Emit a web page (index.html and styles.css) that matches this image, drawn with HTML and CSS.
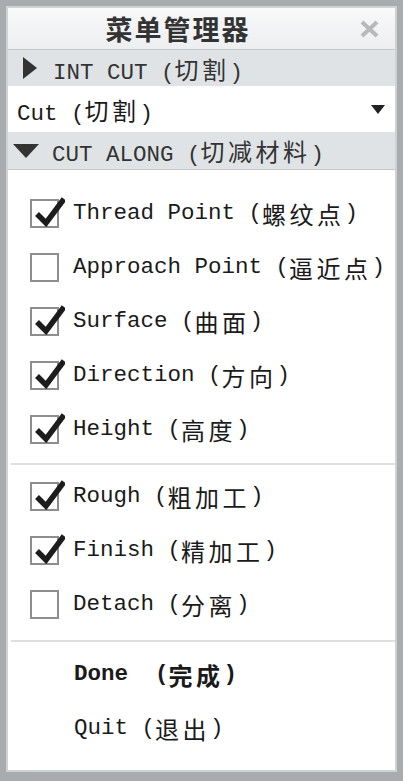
FILE: index.html
```html
<!DOCTYPE html>
<html lang="zh">
<head>
  <meta charset="UTF-8" />
  <title>菜单管理器</title>
  <link rel="stylesheet" href="styles.css">
</head>
<body>

  <div class="window">
    <div class="titlebar">
      <div class="title">菜单管理器</div>
      <svg class="close" width="19" height="18" viewBox="0 0 19 18">
        <path d="M2 2 L17 16 M17 2 L2 16" stroke="#b7b9ba" stroke-width="4" />
      </svg>
    </div>

    <div class="section">
      <span class="tri-right"></span>
      <span class="section-label">INT CUT (<span class="zh">切割</span>)</span>
    </div>

    <div class="select-row">
      <span>Cut (<span class="zh">切割</span>)</span>
      <span class="tri-small"></span>
    </div>

    <div class="section open">
      <span class="tri-down"></span>
      <span class="section-label">CUT ALONG (<span class="zh">切减材料</span>)</span>
    </div>

    <div class="menu">
      <div class="group first">
        <div class="item"><span class="box checked"></span>Thread Point (<span class="zh">螺纹点</span>)</div>
        <div class="item"><span class="box"></span>Approach Point (<span class="zh">逼近点</span>)</div>
        <div class="item"><span class="box checked"></span>Surface (<span class="zh">曲面</span>)</div>
        <div class="item"><span class="box checked"></span>Direction (<span class="zh">方向</span>)</div>
        <div class="item"><span class="box checked"></span>Height (<span class="zh">高度</span>)</div>
      </div>
      <div class="group second">
        <div class="item"><span class="box checked"></span>Rough (<span class="zh">粗加工</span>)</div>
        <div class="item"><span class="box checked"></span>Finish (<span class="zh">精加工</span>)</div>
        <div class="item"><span class="box"></span>Detach (<span class="zh">分离</span>)</div>
      </div>
      <div class="group last">
        <div class="item action bold">Done&nbsp; (<span class="zh">完成</span>)</div>
        <div class="item action">Quit (<span class="zh">退出</span>)</div>
      </div>
    </div>
  </div>

</body>
</html>
```

FILE: styles.css
```css
body {
  margin: 0;
  background: #a9acae;
  font-family: 'Liberation Mono', 'Noto Sans CJK SC', monospace;
  font-size: 22.5px;
  color: #1a1a1a;
}

.window {
  margin: 6px 6px 9px 6px;
  height: 762px;
  border: 2px solid #cfd2d3;
  background: #f3f4f5;
  display: flex;
  flex-direction: column;
}

.zh {
  font-family: 'Noto Sans CJK SC', sans-serif;
  font-size: 24px;
  letter-spacing: 3.5px;
}

/* title bar */
.titlebar {
  height: 42px;
  box-sizing: border-box;
  border-bottom: 1px solid #c3c7c9;
  background: linear-gradient(#f8f9f9, #eceef0);
  display: flex;
  align-items: center;
  padding-right: 16px;
}

.title {
  flex: 1;
  text-align: center;
  padding-right: 12px;
  font-family: 'Noto Sans CJK SC', sans-serif;
  font-weight: bold;
  font-size: 27px;
  letter-spacing: 2px;
  color: #333;
}

/* section headers */
.section {
  height: 36px;
  background: #dfe3e5;
  display: flex;
  align-items: center;
  padding-left: 15px;
  color: #333;
}

.section.open {
  height: 37px;
  padding-left: 5px;
}

.section-label {
  margin-left: 16px;
}

.section.open .section-label {
  margin-left: 13px;
}

.tri-right {
  width: 0;
  height: 0;
  border-top: 11px solid transparent;
  border-bottom: 11px solid transparent;
  border-left: 14px solid #333;
}

.tri-down {
  width: 0;
  height: 0;
  border-left: 13px solid transparent;
  border-right: 13px solid transparent;
  border-top: 14px solid #333;
}

.select-row {
  height: 46px;
  background: #fff;
  display: flex;
  align-items: center;
  justify-content: space-between;
  padding: 0 10px 0 9px;
}

.tri-small {
  width: 0;
  height: 0;
  border-left: 7px solid transparent;
  border-right: 7px solid transparent;
  border-top: 9px solid #222;
}

/* menu list */
.menu {
  flex: 1;
  background: #fff;
  border-top: 1px solid #c4c8ca;
}

.group {
  padding: 16px 0 7px 0;
}

.group.second {
  border-top: 2px solid #dedfe0;
  margin-left: 3px;
  padding: 4px 0 9px 0;
}

.group.last {
  border-top: 2px solid #dedfe0;
  margin-left: 3px;
  padding-top: 5px;
}

.item {
  height: 54px;
  display: flex;
  align-items: center;
  padding-left: 22px;
  white-space: pre;
}

.group.second .item,
.group.last .item {
  padding-left: 19px;
}

.item.action {
  padding-left: 63px !important;
}

.bold {
  font-weight: bold;
}

.box {
  position: relative;
  width: 25px;
  height: 25px;
  border: 2px solid #8e8e8e;
  background: #fff;
  margin-right: 14px;
}

.box.checked::after {
  content: "";
  position: absolute;
  left: 3px;
  top: -4px;
  width: 30px;
  height: 30px;
  background: url("data:image/svg+xml;utf8,<svg xmlns='http://www.w3.org/2000/svg' width='30' height='30' viewBox='0 0 30 30'><path d='M2 17 L11 26 L29 2' fill='none' stroke='%231c1c1c' stroke-width='5.5' stroke-linejoin='miter'/></svg>") no-repeat;
}
```
